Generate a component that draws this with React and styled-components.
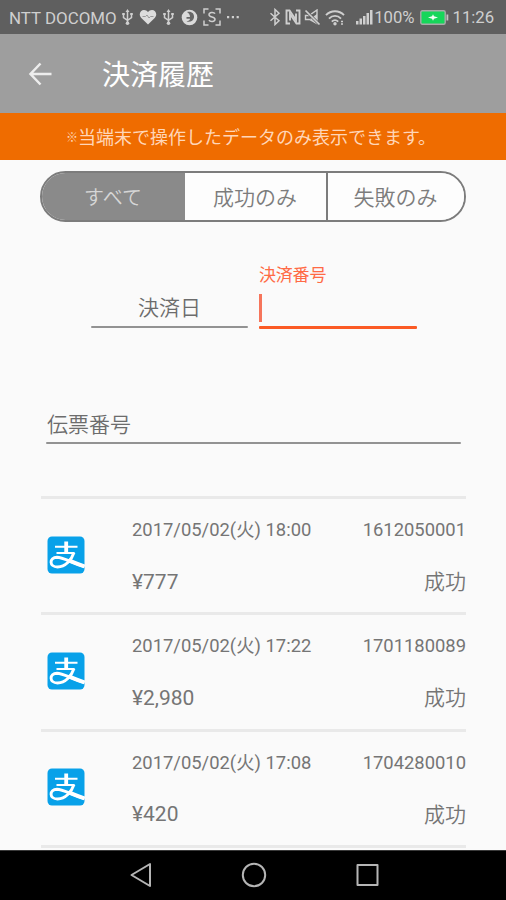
import React from 'react';
import styled, { createGlobalStyle } from 'styled-components';

const GlobalStyle = createGlobalStyle`
  * {
    box-sizing: border-box;
  }
  body {
    margin: 0;
    background: #fafafa;
    font-family: Roboto, 'Noto Sans CJK JP', sans-serif;
    color: #757575;
  }
`;

const Screen = styled.div`
  display: flex;
  flex-direction: column;
  width: 506px;
  height: 900px;
  overflow: hidden;
  background: #fafafa;
`;

const StatusBar = styled.div`
  display: flex;
  align-items: center;
  flex: 0 0 34px;
  padding: 0 11px 0 9px;
  background: #5f5f5f;
  color: #cfcfcf;
  svg {
    display: block;
    flex: none;
  }
`;

const StatusText = styled.span`
  flex: 0 0 ${(props) => props.$width}px;
  padding-top: 2px;
  font-size: ${(props) => props.$size}px;
  line-height: 28px;
  white-space: nowrap;
`;

const StatusIcons = styled.div`
  display: flex;
  align-items: center;
  flex: none;
  gap: ${(props) => props.$gap}px;
  margin-left: ${(props) => props.$left}px;
`;

const AppBar = styled.header`
  display: flex;
  align-items: center;
  flex: 0 0 79px;
  padding-left: 28px;
  background: #9e9e9e;
`;

const Title = styled.h1`
  margin: 4px 0 0 49px;
  font-size: 28px;
  font-weight: 400;
  line-height: 40px;
  color: #fff;
`;

const Notice = styled.div`
  display: flex;
  align-items: center;
  justify-content: center;
  flex: 0 0 47px;
  padding: 2px 4px 0 0;
  background: #ef6c00;
  color: #ffd6b8;
  font-size: 18px;
  line-height: 26px;
`;

const Mark = styled.span`
  font-size: 12px;
  font-weight: 700;
`;

const Segments = styled.div`
  display: flex;
  flex: 0 0 51px;
  width: 426px;
  margin: 11px 0 0 40px;
  border: 2px solid #7c7c7c;
  border-radius: 26px;
  overflow: hidden;
`;

const Segment = styled.button`
  flex: 0 0 ${(props) => props.$width}px;
  padding: 0 1px 1px 0;
  border: 0;
  border-left: ${(props) => (props.$divider ? '2px solid #7c7c7c' : '0')};
  background: ${(props) => (props.$active ? '#8a8a8a' : '#fdfdfd')};
  color: ${(props) => (props.$active ? '#d6d6d6' : '#7c7c7c')};
  font-family: 'Noto Sans CJK JP', sans-serif;
  font-size: ${(props) => (props.$active ? 20 : 21)}px;
  font-weight: 350;
`;

const FieldRow = styled.div`
  display: flex;
  gap: 11px;
  flex: 0 0 68px;
  margin: 39px 0 0 91px;
`;

const Field = styled.div`
  display: flex;
  flex-direction: column;
  justify-content: flex-end;
  width: ${(props) => props.$width}px;
  padding-bottom: ${(props) => (props.$focused ? 0 : 1)}px;
`;

const FieldLabel = styled.label`
  height: 24px;
  font-size: 17px;
  line-height: 24px;
  letter-spacing: -0.2px;
  color: #ff6a45;
`;

const FieldInput = styled.div`
  display: flex;
  align-items: center;
  justify-content: ${(props) => (props.$center ? 'center' : 'flex-start')};
  height: 36px;
  padding: ${(props) => (props.$center ? '0 0 5px' : '0 0 3px 1px')};
  font-family: 'Noto Sans CJK JP', sans-serif;
  font-size: 21px;
  font-weight: 350;
  line-height: 30px;
  color: #6c6c6c;
`;

const Line = styled.div`
  height: ${(props) => (props.$focused ? 3 : 2)}px;
  border-radius: 1px;
  background: ${(props) => (props.$focused ? '#fb5a24' : '#929292')};
`;

const Caret = styled.div`
  width: 3px;
  height: 28px;
  margin: 7px 0 4px;
  background: #f6755b;
`;

const SlipField = styled.div`
  flex: 0 0 38px;
  width: 415px;
  margin: 77px 0 0 46px;
`;

const History = styled.ul`
  flex: 1 1 0;
  min-height: 0;
  width: 425px;
  margin: 52px 0 0 41px;
  padding: 0;
  list-style: none;
  overflow: hidden;
`;

const HistoryItem = styled.li`
  display: grid;
  grid-template-columns: 91px 1fr auto;
  grid-template-rows: 52px 51px;
  align-items: center;
  height: 116.3px;
  padding-top: 5px;
  border-top: 3px solid #e9e9e9;
`;

const Logo = styled.div`
  grid-row: 1 / 3;
  display: flex;
  padding: 0 0 2px 5.5px;
`;

const Small = styled.span`
  font-size: 18.4px;
  line-height: 26px;
  white-space: nowrap;
`;

const Large = styled.span`
  font-size: 21px;
  line-height: 30px;
`;

const Result = styled(Large)`
  padding-bottom: 3px;
  font-family: 'Noto Sans CJK JP', sans-serif;
  font-weight: 350;
  text-align: right;
`;

const NavBar = styled.nav`
  display: flex;
  align-items: center;
  justify-content: center;
  gap: 89px;
  flex: 0 0 50px;
  padding: 0 0 1px 2px;
  border-top: 1px solid #3a3a3a;
  background: #000;
`;

const UsbIcon = () => (
  <svg width="13" height="18" viewBox="0 0 13 18" fill="none" stroke="currentColor" strokeWidth="1.5">
    <path d="M6.5 3v12M2.5 6.5v3.2l4 2.6 4-2.6V6.5" />
    <path d="M6.5 1l2 3h-4zM1.2 5h2.6v2H1.2zM9.2 5h2.6v2H9.2z" fill="currentColor" stroke="none" />
    <circle cx="6.5" cy="15.3" r="1.8" fill="currentColor" stroke="none" />
  </svg>
);

const HeartIcon = () => (
  <svg width="18" height="16" viewBox="0 0 18 16">
    <path d="M9 15.5L2.3 9C-1 5.3 1.5 1 5 1c1.700 0 3 .8 4 2 1-1.200 2.300-2 4-2 3.500 0 6 4.300 2.700 8z" fill="#dcdcdc" />
    <path d="M3.500 7.500h3l1.500-1.500 2 3 1.500-1.500h3" fill="none" stroke="#999" strokeWidth="1" />
  </svg>
);

const BallIcon = () => (
  <svg width="17" height="17" viewBox="0 0 17 17">
    <circle cx="8.5" cy="8.5" r="7.8" fill="#dadada" />
    <path d="M6 3c4.500-1 7.500 1.500 7 5.500-.5 3.500-4 5-7.500 4 2-.5 3.500-1.500 3.500-2.800H5.500V8H9c0-2-1-4-3-5z" fill="#686868" />
  </svg>
);

const ScanIcon = () => (
  <svg width="18" height="18" viewBox="0 0 18 18" fill="none" stroke="currentColor" strokeWidth="1.5">
    <path d="M1 5.500V1h4.500M12.500 1H17v4.500M17 12.500V17h-4.500M5.500 17H1v-4.500" />
    <path d="M12 5.700C11 4 6 4 6 6.700c0 3 6 1.500 6 4.500 0 2.800-5 2.800-6 .8" />
  </svg>
);

const DotsIcon = () => (
  <svg width="14" height="4" viewBox="0 0 14 4" fill="currentColor">
    <path d="M1 1h2.200v2.200H1zM5.800 1H8v2.200H5.800zM10.600 1h2.200v2.200h-2.200z" />
  </svg>
);

const BluetoothIcon = () => (
  <svg width="12" height="18" viewBox="0 0 12 18" fill="none" stroke="currentColor" strokeWidth="1.5">
    <path d="M1.500 5.200l8.500 7.600-4 3.700v-15L10 5.200l-8.500 7.600" />
  </svg>
);

const NfcIcon = () => (
  <svg width="16" height="16" viewBox="0 0 16 16" fill="none" stroke="currentColor" strokeWidth="1.9">
    <path d="M5 14.500H1.500v-13h3l6.500 9.500V4.500" />
    <path d="M11 1.500h3.500v13h-3L5 5v6.500" />
  </svg>
);

const MuteIcon = () => (
  <svg width="17" height="17" viewBox="0 0 17 17">
    <path d="M1.500 6.500h3.500L13 1v13.500L5.500 10.500h-4z" fill="none" stroke="currentColor" strokeWidth="1.4" />
    <path d="M6 10l7-5v10z" fill="currentColor" />
    <path d="M1.500 1.500l14 14" stroke="#5f5f5f" strokeWidth="3" />
    <path d="M1.500 1.500l14 14" stroke="currentColor" strokeWidth="1.7" />
  </svg>
);

const WifiIcon = () => (
  <svg width="20" height="17" viewBox="0 0 20 17" fill="none" stroke="currentColor" strokeWidth="1.9">
    <path d="M1 6.200c5-5.200 13-5.200 18 0M4 9.600c3.500-3.600 8.500-3.600 12 0M6.800 12.600c2-2 4.400-2 6.400 0" />
    <circle cx="10" cy="14.800" r="1.7" fill="currentColor" stroke="none" />
    <path d="M16 12.500h2M16 15h2" strokeWidth="1.4" />
  </svg>
);

const SignalIcon = () => (
  <svg width="18" height="16" viewBox="0 0 18 16" fill="currentColor">
    <path d="M1 12h2.500v3.500H1zM4.500 9.500H7v6H4.500zM8 7h2.500v8.500H8zM11.500 4H14v11.500h-2.500zM15 1h2.500v14.500H15z" />
  </svg>
);

const BatteryIcon = () => (
  <svg width="29" height="15" viewBox="0 0 29 15">
    <rect x=".8" y=".8" width="24.4" height="13.4" rx="1.5" fill="#16d65a" stroke="#aaa" strokeWidth="1.4" />
    <path d="M26.500 4.500h1.800v6h-1.800z" fill="#c4c4c4" />
    <path d="M8 7.500l4-1.200 1-2 1 2 4 1.200-4 1.200-1 2-1-2z" fill="#f2fff5" />
  </svg>
);

const BackIcon = () => (
  <svg width="25" height="24" viewBox="0 0 25 24" fill="none" stroke="#ededed" strokeWidth="2.5">
    <path d="M12.500 1.500L2.500 12l10 10.500M2.500 12H23.500" />
  </svg>
);

const AlipayIcon = () => (
  <svg width="38" height="38" viewBox="0 0 38 38">
    <rect x=".5" y=".5" width="37" height="37" rx="4.5" fill="#08a1e9" />
    <g fill="none" stroke="#fff">
      <path d="M8 10.800h22.500M9.500 17h18" strokeWidth="2" />
      <path d="M19.200 5.500V17" strokeWidth="3.8" />
      <path d="M27 16.500C24.500 24 18.500 31 10.500 31 2 31 2 21.500 10 21.200c6 0 12 4.300 27.500 9.500" strokeWidth="2.9" />
      <path d="M23.500 25.200c4 1.700 8 3.200 14 5.200" strokeWidth="4" />
    </g>
  </svg>
);

const records = [
  { date: '2017/05/02(火) 18:00', number: '1612050001', amount: '¥777', result: '成功' },
  { date: '2017/05/02(火) 17:22', number: '1701180089', amount: '¥2,980', result: '成功' },
  { date: '2017/05/02(火) 17:08', number: '1704280010', amount: '¥420', result: '成功' },
];

const HistoryRow = ({ record }) => (
  <HistoryItem>
    <Logo>
      <AlipayIcon />
    </Logo>
    <Small>{record.date}</Small>
    <Small>{record.number}</Small>
    <Large>{record.amount}</Large>
    <Result>{record.result}</Result>
  </HistoryItem>
);

const App = () => {
  return (
    <Screen>
      <GlobalStyle />
      <StatusBar>
        <StatusText $width={107} $size={16.9}>NTT DOCOMO</StatusText>
        <StatusIcons $left={4} $gap={5.3}>
          <UsbIcon />
          <HeartIcon />
          <UsbIcon />
          <BallIcon />
          <ScanIcon />
          <DotsIcon />
        </StatusIcons>
        <StatusIcons $left={29} $gap={3.5}>
          <BluetoothIcon />
          <NfcIcon />
          <MuteIcon />
          <WifiIcon />
        </StatusIcons>
        <StatusIcons $left={10.5} $gap={1}>
          <SignalIcon />
          <StatusText $width={40} $size={16.7}>100%</StatusText>
        </StatusIcons>
        <StatusIcons $left={5} $gap={4}>
          <BatteryIcon />
          <StatusText $width={42} $size={16.7}>11:26</StatusText>
        </StatusIcons>
      </StatusBar>
      <AppBar>
        <BackIcon />
        <Title>決済履歴</Title>
      </AppBar>
      <Notice>
        <Mark>※</Mark>当端末で操作したデータのみ表示できます。
      </Notice>
      <Segments>
        <Segment $width={143} $active>すべて</Segment>
        <Segment $width={141}>成功のみ</Segment>
        <Segment $width={138} $divider>失敗のみ</Segment>
      </Segments>
      <FieldRow>
        <Field $width={157}>
          <FieldInput $center>決済日</FieldInput>
          <Line />
        </Field>
        <Field $width={158} $focused>
          <FieldLabel>決済番号</FieldLabel>
          <Caret />
          <Line $focused />
        </Field>
      </FieldRow>
      <SlipField>
        <FieldInput>伝票番号</FieldInput>
        <Line />
      </SlipField>
      <History>
        {records.map((record) => (
          <HistoryRow key={record.number} record={record} />
        ))}
        <HistoryItem />
      </History>
      <NavBar>
        <svg width="22" height="26" viewBox="0 0 22 26" fill="none" stroke="#b5b5b5" strokeWidth="2" strokeLinejoin="round">
          <path d="M1.500 13L20 2v22z" />
        </svg>
        <svg width="26" height="26" viewBox="0 0 26 26" fill="none" stroke="#b5b5b5" strokeWidth="2">
          <circle cx="13" cy="13" r="11.2" />
        </svg>
        <svg width="23" height="24" viewBox="0 0 23 24" fill="none" stroke="#b5b5b5" strokeWidth="2" strokeLinejoin="round">
          <rect x="1.5" y="2" width="20" height="20" />
        </svg>
      </NavBar>
    </Screen>
  );
};

export default App;
